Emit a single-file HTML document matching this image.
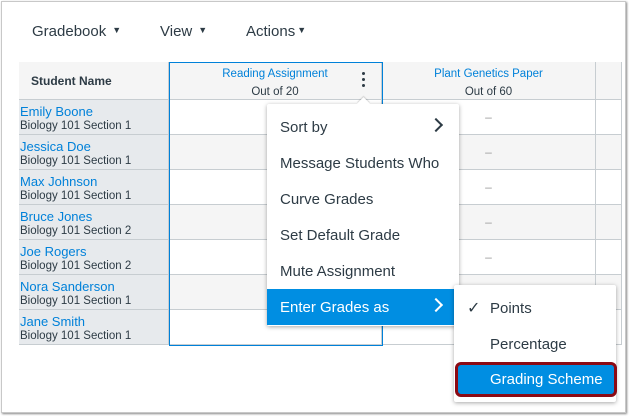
<!DOCTYPE html>
<html><head><style>
*{box-sizing:border-box;margin:0;padding:0}
body{width:629px;height:416px;background:#fff;font-family:"Liberation Sans",sans-serif;position:relative;overflow:hidden;color:#2d3b45}
.frame{position:absolute;left:1px;top:1px;width:625px;height:412px;border:1px solid #c8c8c8;box-shadow:1px 1px 2px #888}
.abs{position:absolute}
.nav{top:23px;font-size:15px;color:#2d3b45}
.tri{font-size:9px;margin-left:6px;vertical-align:3px}
.cell{position:absolute;border-right:1px solid #c7cdd1;border-bottom:1px solid #c7cdd1}
.nm{background:#e7eaed;left:19px;width:150px;height:35px;padding:4px 0 0 1px}
.nm a{display:block;color:#0081d9;font-size:13px;line-height:15px}
.nm span{display:block;font-size:11.5px;line-height:14px;color:#2d3b45}
.g{height:35px;text-align:center;color:#999;font-size:12px;padding-top:10px}
.menu{background:#fff;box-shadow:0 1px 4px rgba(0,0,0,.35);border-radius:2px}
.it{position:absolute;left:0;right:0;height:36px;font-size:15px;padding:10px 0 0 13px;color:#2d3b45}
.chev{position:absolute;right:18px;top:11px;width:10px;height:10px;border-right:2px solid #2d3b45;border-top:2px solid #2d3b45;transform:rotate(45deg)}
</style></head><body>
<div class="frame"></div>
<div class="abs nav" style="left:32px">Gradebook<span class="tri">▼</span></div>
<div class="abs nav" style="left:160px">View<span class="tri">▼</span></div>
<div class="abs nav" style="left:246px">Actions<span class="tri" style="margin-left:2px">▼</span></div>

<div class="abs" style="left:19px;top:62px;width:603px;height:283px;border-left:1px solid #c7cdd1;border-top:1px solid #c7cdd1"></div>
<div class="cell" style="left:19px;top:62px;width:150px;height:38px;background:#f5f5f5;font-size:12px;font-weight:bold;padding:12px 0 0 12px">Student Name</div>
<div class="cell" style="left:169px;top:62px;width:213px;height:38px;background:#f5f5f5;text-align:center;font-size:11.5px;padding-top:3px;line-height:18px"><div style="color:#0081d9">Reading Assignment</div><div>Out of 20</div></div>
<div class="abs" style="left:362px;top:72px;width:3px;height:16px;font-size:0">
<div style="width:3px;height:3px;background:#2d3b45;border-radius:50%;margin-bottom:3px"></div><div style="width:3px;height:3px;background:#2d3b45;border-radius:50%;margin-bottom:3px"></div><div style="width:3px;height:3px;background:#2d3b45;border-radius:50%"></div></div>
<div class="cell" style="left:382px;top:62px;width:214px;height:38px;background:#f5f5f5;text-align:center;font-size:11.5px;padding-top:3px;line-height:18px"><div style="color:#0081d9">Plant Genetics Paper</div><div>Out of 60</div></div>
<div class="cell" style="left:596px;top:62px;width:26px;height:38px;background:#f5f5f5"></div>

<div class="cell nm" style="top:100px"><a>Emily Boone</a><span>Biology 101 Section 1</span></div>
<div class="cell nm" style="top:135px"><a>Jessica Doe</a><span>Biology 101 Section 1</span></div>
<div class="cell nm" style="top:170px"><a>Max Johnson</a><span>Biology 101 Section 1</span></div>
<div class="cell nm" style="top:205px"><a>Bruce Jones</a><span>Biology 101 Section 2</span></div>
<div class="cell nm" style="top:240px"><a>Joe Rogers</a><span>Biology 101 Section 2</span></div>
<div class="cell nm" style="top:275px"><a>Nora Sanderson</a><span>Biology 101 Section 1</span></div>
<div class="cell nm" style="top:310px"><a>Jane Smith</a><span>Biology 101 Section 1</span></div>

<div class="cell g" style="left:169px;top:100px;width:213px;background:#fff"></div>
<div class="cell g" style="left:169px;top:135px;width:213px;background:#f5f5f5"></div>
<div class="cell g" style="left:169px;top:170px;width:213px;background:#fff"></div>
<div class="cell g" style="left:169px;top:205px;width:213px;background:#f5f5f5"></div>
<div class="cell g" style="left:169px;top:240px;width:213px;background:#fff"></div>
<div class="cell g" style="left:169px;top:275px;width:213px;background:#f5f5f5"></div>
<div class="cell g" style="left:169px;top:310px;width:213px;background:#fff"></div>
<div class="cell g" style="left:382px;top:100px;width:214px;background:#fff">–</div>
<div class="cell g" style="left:382px;top:135px;width:214px;background:#f5f5f5">–</div>
<div class="cell g" style="left:382px;top:170px;width:214px;background:#fff">–</div>
<div class="cell g" style="left:382px;top:205px;width:214px;background:#f5f5f5">–</div>
<div class="cell g" style="left:382px;top:240px;width:214px;background:#fff">–</div>
<div class="cell g" style="left:382px;top:275px;width:214px;background:#f5f5f5"></div>
<div class="cell g" style="left:382px;top:310px;width:214px;background:#fff"></div>
<div class="cell g" style="left:596px;top:100px;width:26px;background:#fff"></div>
<div class="cell g" style="left:596px;top:135px;width:26px;background:#f5f5f5"></div>
<div class="cell g" style="left:596px;top:170px;width:26px;background:#fff"></div>
<div class="cell g" style="left:596px;top:205px;width:26px;background:#f5f5f5"></div>
<div class="cell g" style="left:596px;top:240px;width:26px;background:#fff"></div>
<div class="cell g" style="left:596px;top:275px;width:26px;background:#f5f5f5"></div>
<div class="cell g" style="left:596px;top:310px;width:26px;background:#fff"></div>
<div class="abs" style="left:169px;top:62px;width:214px;height:284px;border:1px solid #0081d9"></div>

<div class="abs menu" style="left:267px;top:104px;width:192px;height:222px">
<div class="it" style="top:5px">Sort by<div class="chev"></div></div>
<div class="it" style="top:41px">Message Students Who</div>
<div class="it" style="top:77px">Curve Grades</div>
<div class="it" style="top:113px">Set Default Grade</div>
<div class="it" style="top:149px">Mute Assignment</div>
<div class="it" style="top:185px;background:#008ee2;color:#fff">Enter Grades as<div class="chev" style="border-color:#fff"></div></div>
</div>
<div class="abs" style="left:359px;top:99px;width:9px;height:9px;background:#fff;transform:rotate(45deg);box-shadow:-1px -1px 1px rgba(0,0,0,.15)"></div>

<div class="abs menu" style="left:454px;top:285px;width:162px;height:117px">
<div class="it" style="top:5px;padding-left:36px">Points<span style="position:absolute;left:13px;top:8px;font-size:16px">✓</span></div>
<div class="it" style="top:41px;padding-left:36px">Percentage</div>
<div class="abs" style="left:1px;top:77px;width:162px;height:35px;background:#008ee2;border:3px solid #8b0a14;border-radius:6px;color:#fff;font-size:15px;padding:6px 0 0 32px">Grading Scheme</div>
</div>
</body></html>
